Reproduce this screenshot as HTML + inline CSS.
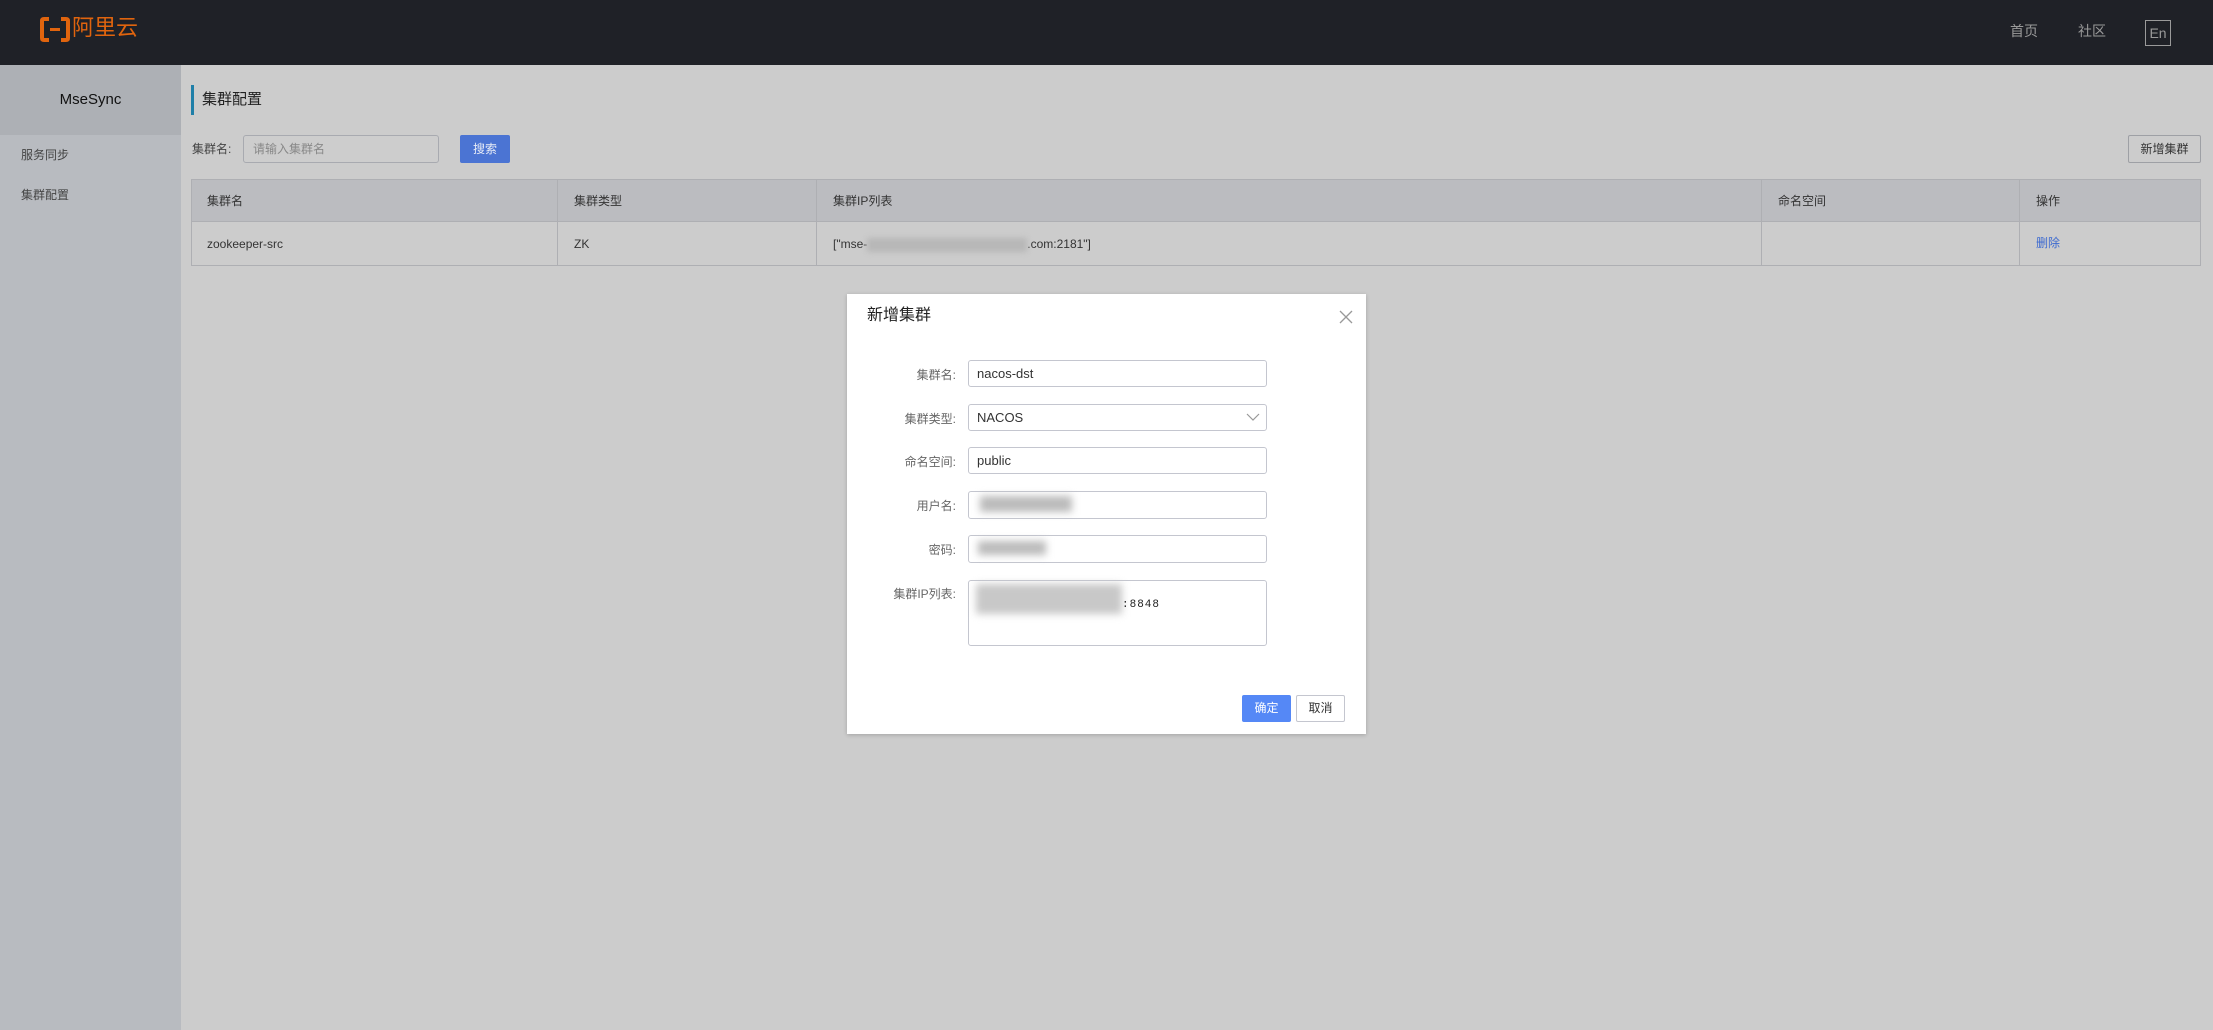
<!DOCTYPE html>
<html><head><meta charset="utf-8"><style>
*{box-sizing:border-box;margin:0;padding:0}
body{width:2213px;height:1030px;overflow:hidden;background:#cccccc;font-family:"Liberation Sans","Noto Sans CJK SC",sans-serif;font-size:13px;color:#333;position:relative}
.abs{position:absolute}
.hdr{left:0;top:0;width:2213px;height:65px;background:#1f2127}
.side{left:0;top:65px;width:181px;height:965px;background:#b8bbc0}
.sidetop{left:0;top:65px;width:181px;height:70px;background:#adb0b5;text-align:center;line-height:70px;font-size:15px;color:#111}
.cell{position:absolute;border:1px solid #aeafb3}
.inp{position:absolute;background:#fff;border:1px solid #c4c6cf;border-radius:3px;font-size:13px;color:#333;padding-left:8px;line-height:25px}
.lbl{position:absolute;width:120px;text-align:right;color:#666;font-size:12px}
.blur{position:absolute;background:#bbb;filter:blur(4px)}
</style></head><body>
<div class="abs hdr"></div>
<svg class="abs" style="left:40px;top:17px" width="30" height="25" viewBox="0 0 30 25"><path d="M9 2H4Q2 2 2 4V21Q2 23 4 23H9M21 2H26Q28 2 28 4V21Q28 23 26 23H21" stroke="#e0640e" stroke-width="4" fill="none"/><rect x="10" y="11" width="10" height="3" fill="#e0640e"/></svg>
<div class="abs" style="left:72px;top:14px;font-size:22px;color:#e0640e;line-height:28px">阿里云</div>
<div class="abs" style="left:2010px;top:22px;color:#9a9a9a;font-size:14px;line-height:18px">首页</div>
<div class="abs" style="left:2078px;top:22px;color:#9a9a9a;font-size:14px;line-height:18px">社区</div>
<div class="abs" style="left:2145px;top:20px;width:26px;height:26px;border:1px solid #9a9a9a;color:#9a9a9a;font-size:14px;text-align:center;line-height:24px">En</div>
<div class="abs side"></div>
<div class="abs sidetop">MseSync</div>
<div class="abs" style="left:21px;top:147px;font-size:12px;color:#444;line-height:16px">服务同步</div>
<div class="abs" style="left:21px;top:187px;font-size:12px;color:#444;line-height:16px">集群配置</div>
<div class="abs" style="left:191px;top:85px;width:3px;height:30px;background:#1f7fa8"></div>
<div class="abs" style="left:202px;top:89px;font-size:15px;color:#222;line-height:22px">集群配置</div>
<div class="abs" style="left:192px;top:141px;font-size:12px;color:#444;line-height:16px">集群名:</div>
<div class="abs" style="left:243px;top:135px;width:196px;height:28px;border:1px solid #a8aab0;border-radius:3px;background:#cdcdcd;color:#888;font-size:12px;padding-left:9px;line-height:26px">请输入集群名</div>
<div class="abs" style="left:460px;top:135px;width:50px;height:28px;background:#4b74d3;border-radius:2px;color:#e8ecf6;font-size:12px;text-align:center;line-height:28px">搜索</div>
<div class="abs" style="left:2128px;top:135px;width:73px;height:28px;border:1px solid #9ea0a5;border-radius:2px;color:#333;font-size:12px;text-align:center;line-height:26px">新增集群</div>
<div class="abs" style="left:191px;top:179px;width:2010px;height:43px;background:#bbbcc0"></div>
<div class="cell" style="left:191px;top:179px;width:2010px;height:87px"></div>
<div class="abs" style="left:191px;top:221px;width:2010px;height:1px;background:#aeafb3"></div>
<div class="abs" style="left:557px;top:179px;width:1px;height:87px;background:#aeafb3"></div>
<div class="abs" style="left:816px;top:179px;width:1px;height:87px;background:#aeafb3"></div>
<div class="abs" style="left:1761px;top:179px;width:1px;height:87px;background:#aeafb3"></div>
<div class="abs" style="left:2019px;top:179px;width:1px;height:87px;background:#aeafb3"></div>
<div class="abs" style="left:207px;top:193px;font-size:12px;line-height:16px">集群名</div>
<div class="abs" style="left:574px;top:193px;font-size:12px;line-height:16px">集群类型</div>
<div class="abs" style="left:833px;top:193px;font-size:12px;line-height:16px">集群IP列表</div>
<div class="abs" style="left:1778px;top:193px;font-size:12px;line-height:16px">命名空间</div>
<div class="abs" style="left:2036px;top:193px;font-size:12px;line-height:16px">操作</div>
<div class="abs" style="left:207px;top:236px;font-size:12px;line-height:16px">zookeeper-src</div>
<div class="abs" style="left:574px;top:236px;font-size:12px;line-height:16px">ZK</div>
<div class="abs" style="left:833px;top:236px;font-size:12px;line-height:16px">["mse-<span style="display:inline-block;width:160px;height:14px;background:#b7b7b7;filter:blur(3px);vertical-align:middle"></span>.com:2181"]</div>
<div class="abs" style="left:2036px;top:235px;font-size:12px;color:#3d6ad0;line-height:16px">删除</div>

<div class="abs" style="left:847px;top:294px;width:519px;height:440px;background:#fff;box-shadow:0 1px 4px rgba(0,0,0,.2)"></div>
<div class="abs" style="left:867px;top:305px;font-size:16px;color:#222;line-height:22px">新增集群</div>
<svg class="abs" style="left:1339px;top:310px" width="14" height="14"><path d="M1 1L13 13M13 1L1 13" stroke="#999" stroke-width="1.3"/></svg>
<div class="lbl" style="left:836px;top:366px">集群名:</div>
<div class="lbl" style="left:836px;top:410px">集群类型:</div>
<div class="lbl" style="left:836px;top:453px">命名空间:</div>
<div class="lbl" style="left:836px;top:497px">用户名:</div>
<div class="lbl" style="left:836px;top:541px">密码:</div>
<div class="lbl" style="left:836px;top:585px">集群IP列表:</div>
<div class="inp" style="left:968px;top:360px;width:299px;height:27px">nacos-dst</div>
<div class="inp" style="left:968px;top:404px;width:299px;height:27px">NACOS</div>
<svg class="abs" style="left:1246px;top:412px" width="14" height="10"><path d="M1 2L7 8L13 2" stroke="#999" stroke-width="1.2" fill="none"/></svg>
<div class="inp" style="left:968px;top:447px;width:299px;height:27px">public</div>
<div class="inp" style="left:968px;top:491px;width:299px;height:28px"></div>
<div class="blur" style="left:980px;top:496px;width:92px;height:16px"></div>
<div class="inp" style="left:968px;top:535px;width:299px;height:28px"></div>
<div class="blur" style="left:978px;top:541px;width:68px;height:14px"></div>
<div class="inp" style="left:968px;top:580px;width:299px;height:66px"></div>
<div class="blur" style="left:976px;top:584px;width:146px;height:30px;background:#c8c8c8"></div>
<div class="abs" style="left:1122px;top:599px;font-family:'Liberation Mono',monospace;font-size:11px;color:#222;letter-spacing:1px">:8848</div>
<div class="abs" style="left:1242px;top:695px;width:49px;height:27px;background:#5588f6;border-radius:2px;color:#fff;font-size:12px;text-align:center;line-height:27px">确定</div>
<div class="abs" style="left:1296px;top:695px;width:49px;height:27px;border:1px solid #c4c6cf;border-radius:2px;color:#333;font-size:12px;text-align:center;line-height:25px">取消</div>
</body></html>
